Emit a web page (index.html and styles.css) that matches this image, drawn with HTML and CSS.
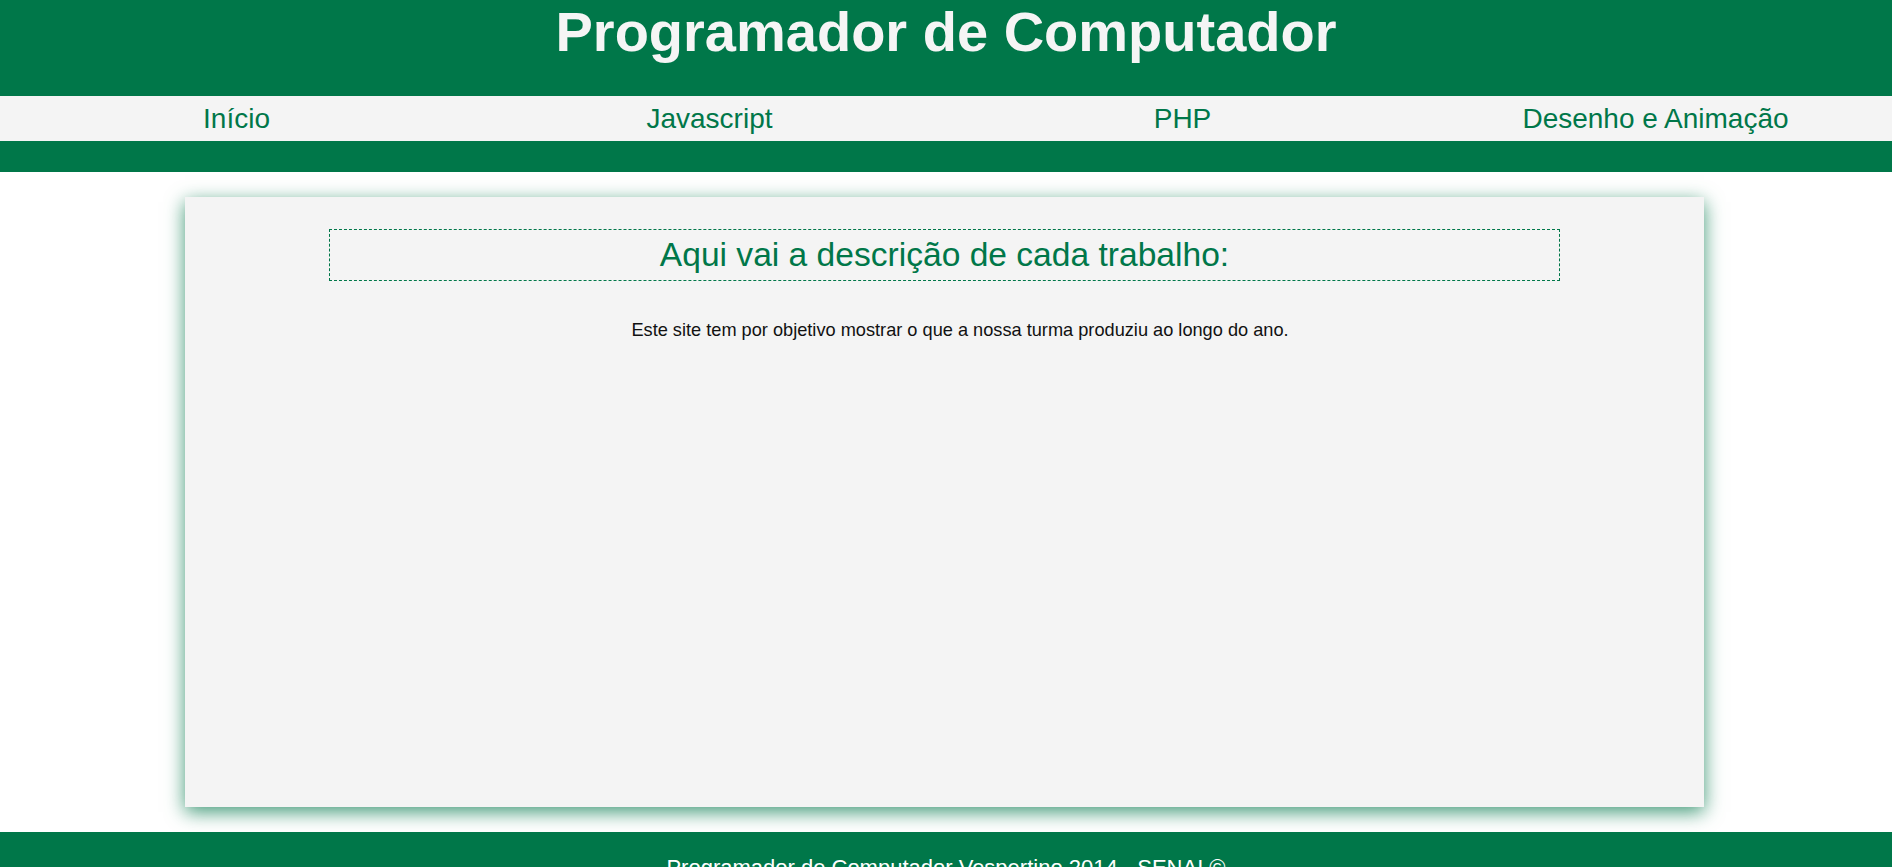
FILE: index.html
```html
<!DOCTYPE html>
<html lang="pt-BR">
<head>
<meta charset="utf-8">
<title>Programador de Computador</title>
<link rel="stylesheet" href="styles.css">
</head>
<body>
<header class="topo">
  <h1 class="titulo">Programador de Computador</h1>
  <nav class="menu">
    <a class="menu-item" href="#">Início</a>
    <a class="menu-item" href="#">Javascript</a>
    <a class="menu-item" href="#">PHP</a>
    <a class="menu-item" href="#">Desenho e Animação</a>
  </nav>
</header>
<main class="conteudo">
  <h2 class="descricao">Aqui vai a descrição de cada trabalho:</h2>
  <p class="texto">Este site tem por objetivo mostrar o que a nossa turma produziu ao longo do ano.</p>
</main>
<footer class="rodape">
  <p class="rodape-texto">Programador de Computador Vespertino 2014 - SENAI ©</p>
</footer>
</body>
</html>
```
FILE: styles.css
```css
html, body {
  margin: 0;
  padding: 0;
  background: #ffffff;
  font-family: "Liberation Sans", Arial, sans-serif;
}

.topo {
  background: #007749;
  padding-bottom: 31px;
}

.titulo {
  margin: 0;
  height: 96px;
  font-size: 56px;
  font-weight: bold;
  line-height: 64px;
  color: #f5f5f5;
  text-align: center;
}

.menu {
  display: grid;
  grid-template-columns: repeat(4, 1fr);
  height: 45px;
  align-items: center;
  background: #f4f4f4;
}

.menu-item {
  text-align: center;
  font-size: 28px;
  color: #007749;
  text-decoration: none;
  line-height: 32px;
}

.conteudo {
  box-sizing: border-box;
  width: 1519px;
  height: 610px;
  margin: 25px auto 25px 185px;
  padding: 32px 144px 0 144px;
  background: #f4f4f4;
  box-shadow: 0 5px 18px rgba(0, 119, 73, 0.75);
}

.descricao {
  box-sizing: border-box;
  margin: 0;
  height: 52px;
  border: 1px dashed #007749;
  font-size: 33.6px;
  font-weight: normal;
  line-height: 50px;
  color: #007749;
  text-align: center;
}

.texto {
  margin: 39px 0 0 0;
  padding-left: 31px;
  font-size: 18.2px;
  line-height: 21px;
  color: #111111;
  text-align: center;
}

.rodape {
  background: #007749;
  padding: 23px 0 20px 0;
}

.rodape-texto {
  margin: 0;
  font-size: 22px;
  line-height: 25px;
  color: #ffffff;
  text-align: center;
}
```
